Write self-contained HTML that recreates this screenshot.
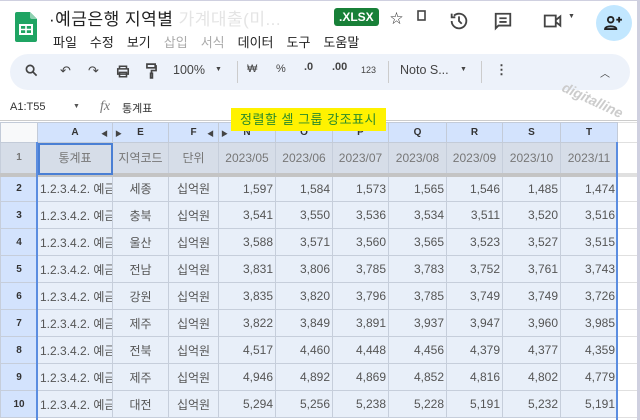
<!DOCTYPE html>
<html><head><meta charset="utf-8">
<style>
*{margin:0;padding:0;box-sizing:border-box}
body{width:640px;height:420px;overflow:hidden;background:#fff;font-family:"Liberation Sans","Noto Sans CJK KR",sans-serif;position:relative;color:#333}
.a{position:absolute}
.frame{left:0;top:0;width:640px;height:420px;border-top:1px solid #cfd0e0;border-right:3px solid #cfd0e0;pointer-events:none}
.menu span{margin-right:13px}
table{position:absolute;left:0;top:122px;width:640px;border-collapse:collapse;table-layout:fixed}
td{border:1px solid #c6cedb;height:27px;font-size:12px;color:#555;background:#e8eff9;white-space:nowrap;overflow:hidden;padding:0 2px}
tr.h td{height:20px;background:#d3e3fd;font-size:10px;font-weight:bold;color:#333;text-align:center;border-color:#c3cbd8}
tr.r1 td{height:32px;background:#d6dde8;color:#777;text-align:center;border-bottom:4px solid #c4c4c4}
td.rh{background:#d3e3fd;font-size:10px;font-weight:bold;color:#333;text-align:center}
td.n{text-align:right}
td.c{text-align:center}
td.x{background:#fff;border-color:#e0e0e0}
tr.h td.x,tr.r1 td.x{background:#fff;border-color:#e0e0e0}
tr.h td.corner{background:#f8f9fa}
</style></head><body>
<svg class="a" style="left:15px;top:12px" width="22" height="30" viewBox="0 0 22 30"><path d="M2 0h13l7 7v21a2 2 0 0 1-2 2H2a2 2 0 0 1-2-2V2a2 2 0 0 1 2-2z" fill="#1fa463"/><path d="M15 0l7 7h-5a2 2 0 0 1-2-2z" fill="#8ed1b1"/><rect x="5" y="13" width="12" height="9" fill="none" stroke="#fff" stroke-width="2"/><path d="M5 17.5h12M11 13v9" stroke="#fff" stroke-width="1.6"/></svg>
<div class="a" style="left:49px;top:5px;font-size:17px;color:#222;letter-spacing:0.5px">·예금은행 지역별 <span style="color:#e4e4e4">가계대출(미...</span></div>
<div class="a" style="left:334px;top:8px;background:#188038;color:#fff;font-size:12px;font-weight:bold;padding:2px 5px;border-radius:3px">.XLSX</div>
<div class="a" style="left:390px;top:8px;font-size:13px">☆</div>
<svg class="a" style="left:416px;top:9px" width="12" height="14"><rect x="2" y="2" width="7" height="9" fill="none" stroke="#444" stroke-width="1.6"/></svg>
<svg class="a" style="left:448px;top:10px" width="22" height="22" viewBox="0 0 24 24" fill="none" stroke="#444" stroke-width="2"><path d="M4 12a8 8 0 1 0 2.5-5.8M4 4v4h4M12 7v5l3 3"/></svg>
<svg class="a" style="left:493px;top:11px" width="20" height="20" viewBox="0 0 22 22" fill="none" stroke="#444" stroke-width="2"><path d="M3 3h16v13H6l-3 3z M7 8h8M7 12h8"/></svg>
<svg class="a" style="left:542px;top:12px" width="22" height="18" viewBox="0 0 24 18" fill="none" stroke="#444" stroke-width="2"><path d="M3 3h12v12H3z M15 8l5-4v10l-5-4"/></svg>
<div class="a" style="left:568px;top:13px;font-size:7px;color:#444">▼</div>
<div class="a" style="left:596px;top:5px;width:36px;height:36px;border-radius:18px;background:#c2e7ff"></div>
<svg class="a" style="left:604px;top:15px" width="19" height="15" viewBox="0 0 20 16" fill="none" stroke="#222" stroke-width="2"><circle cx="7" cy="5" r="3"/><path d="M1 15c0-4 12-4 12 0zM16 2v6M13 5h6"/></svg>
<div class="a menu" style="left:53px;top:32px;font-size:13px;color:#222"><span>파일</span><span>수정</span><span>보기</span><span style="color:#aaa">삽입</span><span style="color:#aaa">서식</span><span>데이터</span><span>도구</span><span>도움말</span></div>
<div class="a" style="left:10px;top:54px;width:620px;height:36px;border-radius:18px;background:#edf2fa"></div>
<div class="a" style="left:25px;top:63px;font-size:13px;color:#444;white-space:nowrap">
<svg width="13" height="13" viewBox="0 0 14 14" style="vertical-align:-2px" fill="none" stroke="#444" stroke-width="1.8"><circle cx="5.5" cy="5.5" r="4"/><path d="M8.5 8.5l4 4"/></svg>
<span style="position:absolute;left:35px;top:0">↶</span><span style="position:absolute;left:63px;top:0">↷</span>
<svg style="position:absolute;left:91px;top:2px" width="14" height="13" viewBox="0 0 16 14" fill="none" stroke="#444" stroke-width="1.8"><path d="M4 4V1h8v3M2 4h12v6H2zM4 8h8v5H4z"/></svg>
<svg style="position:absolute;left:121px;top:0" width="11" height="16" viewBox="0 0 12 17" fill="none" stroke="#444" stroke-width="1.8"><path d="M1 1h9v4H1zM10 3h1v5H6v3M5 11h2v5H5z"/></svg>
<span style="position:absolute;left:148px;top:0;font-size:12.5px">100%</span><span style="position:absolute;left:190px;top:3px;font-size:7px">▼</span>
<span style="position:absolute;left:212px;top:-2px;width:1px;height:22px;background:#ccc"></span>
<span style="position:absolute;left:222px;top:0;font-size:11px">₩</span>
<span style="position:absolute;left:251px;top:0;font-size:11px">%</span>
<span style="position:absolute;left:279px;top:-2px;font-size:11px;font-weight:bold">.0</span>
<span style="position:absolute;left:307px;top:-2px;font-size:11px;font-weight:bold">.00</span>
<span style="position:absolute;left:336px;top:2px;font-size:9px">123</span>
<span style="position:absolute;left:363px;top:-2px;width:1px;height:22px;background:#ccc"></span>
<span style="position:absolute;left:375px;top:0;font-size:12.5px">Noto S...</span><span style="position:absolute;left:435px;top:3px;font-size:7px">▼</span>
<span style="position:absolute;left:456px;top:-2px;width:1px;height:22px;background:#ccc"></span>
<span style="position:absolute;left:470px;top:-1px;font-weight:bold">⋮</span>
<span style="position:absolute;left:575px;top:2px;font-size:10px">︿</span>
</div>
<div class="a" style="left:10px;top:101px;font-size:11px;color:#333">A1:T55</div>
<div class="a" style="left:73px;top:103px;font-size:7px;color:#555">▼</div>
<div class="a" style="left:100px;top:99px;font-size:14px;font-style:italic;font-family:'Liberation Serif',serif;color:#777">fx</div>
<div class="a" style="left:122px;top:100px;font-size:11px;color:#333">통계표</div>
<div class="a" style="left:0;top:120px;width:640px;height:1px;background:#ccc"></div>
<div class="a" style="left:560px;top:92px;font-size:14px;font-style:italic;font-weight:bold;color:#ccc;transform:rotate(25deg);z-index:3">digitalline</div>
<table>
<colgroup><col style="width:37px"><col style="width:75px"><col style="width:56px"><col style="width:50px"><col style="width:57px"><col style="width:57px"><col style="width:56px"><col style="width:58px"><col style="width:56px"><col style="width:58px"><col style="width:57px"><col style="width:23px"></colgroup>
<tr class="h"><td class="corner"></td><td>A</td><td>E</td><td>F</td><td>N</td><td>O</td><td>P</td><td>Q</td><td>R</td><td>S</td><td>T</td><td class="x"></td></tr>
<tr class="r1"><td class="rh">1</td><td style="outline:2px solid #4a7fd4;outline-offset:-2px">통계표</td><td>지역코드</td><td>단위</td><td>2023/05</td><td>2023/06</td><td>2023/07</td><td>2023/08</td><td>2023/09</td><td>2023/10</td><td>2023/11</td><td class="x"></td></tr>
<tr><td class="rh">2</td><td>1.2.3.4.2. 예금</td><td class="c">세종</td><td class="c">십억원</td><td class="n">1,597</td><td class="n">1,584</td><td class="n">1,573</td><td class="n">1,565</td><td class="n">1,546</td><td class="n">1,485</td><td class="n">1,474</td><td class="x"></td></tr>
<tr><td class="rh">3</td><td>1.2.3.4.2. 예금</td><td class="c">충북</td><td class="c">십억원</td><td class="n">3,541</td><td class="n">3,550</td><td class="n">3,536</td><td class="n">3,534</td><td class="n">3,511</td><td class="n">3,520</td><td class="n">3,516</td><td class="x"></td></tr>
<tr><td class="rh">4</td><td>1.2.3.4.2. 예금</td><td class="c">울산</td><td class="c">십억원</td><td class="n">3,588</td><td class="n">3,571</td><td class="n">3,560</td><td class="n">3,565</td><td class="n">3,523</td><td class="n">3,527</td><td class="n">3,515</td><td class="x"></td></tr>
<tr><td class="rh">5</td><td>1.2.3.4.2. 예금</td><td class="c">전남</td><td class="c">십억원</td><td class="n">3,831</td><td class="n">3,806</td><td class="n">3,785</td><td class="n">3,783</td><td class="n">3,752</td><td class="n">3,761</td><td class="n">3,743</td><td class="x"></td></tr>
<tr><td class="rh">6</td><td>1.2.3.4.2. 예금</td><td class="c">강원</td><td class="c">십억원</td><td class="n">3,835</td><td class="n">3,820</td><td class="n">3,796</td><td class="n">3,785</td><td class="n">3,749</td><td class="n">3,749</td><td class="n">3,726</td><td class="x"></td></tr>
<tr><td class="rh">7</td><td>1.2.3.4.2. 예금</td><td class="c">제주</td><td class="c">십억원</td><td class="n">3,822</td><td class="n">3,849</td><td class="n">3,891</td><td class="n">3,937</td><td class="n">3,947</td><td class="n">3,960</td><td class="n">3,985</td><td class="x"></td></tr>
<tr><td class="rh">8</td><td>1.2.3.4.2. 예금</td><td class="c">전북</td><td class="c">십억원</td><td class="n">4,517</td><td class="n">4,460</td><td class="n">4,448</td><td class="n">4,456</td><td class="n">4,379</td><td class="n">4,377</td><td class="n">4,359</td><td class="x"></td></tr>
<tr><td class="rh">9</td><td>1.2.3.4.2. 예금</td><td class="c">제주</td><td class="c">십억원</td><td class="n">4,946</td><td class="n">4,892</td><td class="n">4,869</td><td class="n">4,852</td><td class="n">4,816</td><td class="n">4,802</td><td class="n">4,779</td><td class="x"></td></tr>
<tr><td class="rh">10</td><td>1.2.3.4.2. 예금</td><td class="c">대전</td><td class="c">십억원</td><td class="n">5,294</td><td class="n">5,256</td><td class="n">5,238</td><td class="n">5,228</td><td class="n">5,191</td><td class="n">5,232</td><td class="n">5,191</td><td class="x"></td></tr>
</table>
<div class="a" style="left:36px;top:142px;width:2px;height:278px;background:#5b8de0"></div>
<div class="a" style="left:616px;top:142px;width:2px;height:278px;background:#5b8de0"></div>
<div class="a" style="left:101px;top:129px;font-size:7px;color:#444">◀</div>
<div class="a" style="left:115px;top:129px;font-size:7px;color:#444">▶</div>
<div class="a" style="left:207px;top:129px;font-size:7px;color:#444">◀</div>
<div class="a" style="left:221px;top:129px;font-size:7px;color:#444">▶</div>
<div class="a" style="left:231px;top:108px;width:155px;height:23px;background:#fff200;color:#2a8a2a;font-size:13px;line-height:23px;text-align:center;letter-spacing:0.5px;z-index:4">정렬할 셀 그룹 강조표시</div>
<div class="a frame"></div>
</body></html>
